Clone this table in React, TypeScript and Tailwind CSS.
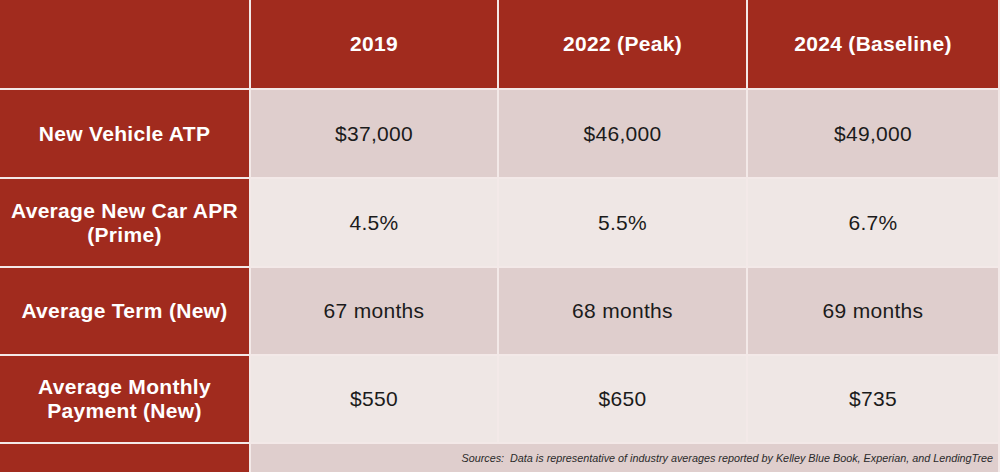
import React from "react";

const RED = "bg-[#a12b1e]";

const rows = [
  { label: ["New Vehicle ATP"], vals: ["$37,000", "$46,000", "$49,000"], bg: "bg-[#dfcecd]" },
  { label: ["Average New Car APR", "(Prime)"], vals: ["4.5%", "5.5%", "6.7%"], bg: "bg-[#efe7e5]" },
  { label: ["Average Term (New)"], vals: ["67 months", "68 months", "69 months"], bg: "bg-[#dfcecd]" },
  { label: ["Average Monthly", "Payment (New)"], vals: ["$550", "$650", "$735"], bg: "bg-[#efe7e5]" },
];

export default function App() {
  return (
    <div
      className="w-[1000px] h-[472px] overflow-hidden bg-[#f3e9e8] pr-[1px]"
      style={{ fontFamily: '"Liberation Sans", Arial, sans-serif' }}
    >
      <div className="grid grid-cols-[249px_246px_247px_250px] grid-rows-[88px_87px_87px_86px_86px_28px] gap-[2px] h-full">
        <div className={RED} />
        {["2019", "2022 (Peak)", "2024 (Baseline)"].map((h) => (
          <div key={h} className={`${RED} flex items-center justify-center text-white font-bold text-[21px] tracking-[0.3px]`}>
            {h}
          </div>
        ))}
        {rows.map((r, i) => (
          <React.Fragment key={i}>
            <div className={`${RED} flex flex-col items-center justify-center text-white font-bold text-[21px] tracking-[0.3px] leading-[24px] text-center`}>
              {r.label.map((l) => (
                <div key={l}>{l}</div>
              ))}
            </div>
            {r.vals.map((v, j) => (
              <div key={j} className={`${r.bg} flex items-center justify-center text-[#1b1b1b] text-[21px] tracking-[0.3px]`}>
                {v}
              </div>
            ))}
          </React.Fragment>
        ))}
        <div className={RED} />
        <div className="col-span-3 bg-[#dfcecd] flex items-center justify-end pr-[5px] text-[10.8px] italic text-[#2a2a2a] whitespace-pre">
          {"Sources:  Data is representative of industry averages reported by Kelley Blue Book, Experian, and LendingTree"}
        </div>
      </div>
    </div>
  );
}
